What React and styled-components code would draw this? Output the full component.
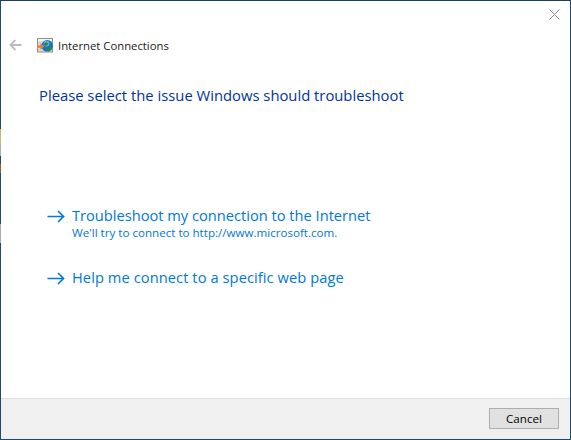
import React from "react";
import styled, { createGlobalStyle } from "styled-components";

const GlobalStyle = createGlobalStyle`
    html, body {
        margin: 0;
        padding: 0;
        background: #ffffff;
    }
    body {
        font-family: "Open Sans", "Noto Sans", "Liberation Sans", sans-serif;
    }
`;

// taskbar colours showing through the glass edge on the left
const edgeSegments = [
    { h: 128, c: "#1f4a6e" },
    { h: 15, c: "#c9b56e" },
    { h: 12, c: "#a9adad" },
    { h: 8, c: "#1f4a6e" },
    { h: 9, c: "#9a5f3a" },
    { h: 51, c: "#1f4a6e" },
    { h: 19, c: "#a9adb0" },
    { h: 198, c: "#1f4a6e" },
];

const BackIcon = () => (
    <svg width="13" height="12" viewBox="0 0 13 12" fill="none" stroke="#bcbcbc" strokeWidth="1.8">
        <path d="M12.5 6H1.5M6.4 1L1.4 6l5 5" />
    </svg>
);

const ConnectionIcon = () => (
    <svg width="16" height="15" viewBox="0 0 16 15">
        <rect x="0.5" y="0.5" width="15" height="13.5" fill="#d8d8d8" stroke="#8f8f8f" />
        <rect x="1" y="1" width="14" height="2" fill="#f7f7f7" />
        <circle cx="10.2" cy="7.8" r="5.8" fill="#1573c9" />
        <circle cx="9.6" cy="5.6" r="2.8" fill="#5cb4ee" />
        <path d="M7.2 5.4c1.6-1.6 3.4-1 4 .4L9.6 8 7.4 7.2zM9.6 10l3.8-1.6 1 1.8-3 3.2-1.8-.6z" fill="#2a8a32" />
        <path d="M0.6 7.4h2.8V5.2l4 3.3-4 3.3V9.8H0.6z" fill="#ea7a2c" />
    </svg>
);

const ArrowIcon = () => (
    <svg width="18" height="13" viewBox="0 0 18 13" fill="none" stroke="#0078d7" strokeWidth="1.6">
        <path d="M0.5 6.5h16M11 1l5.6 5.5L11 12" />
    </svg>
);

const CloseIcon = () => (
    <svg width="11" height="11" viewBox="0 0 11 11" fill="none" stroke="#8c8c8c" strokeWidth="1">
        <path d="M0.5 0.5l10 10M10.5 0.5l-10 10" />
    </svg>
);

const App = () => {
    return (
        <>
            <GlobalStyle />
            <Frame>
                <LeftEdge>
                    {edgeSegments.map((s, i) => (
                        <EdgeSegment key={i} $h={s.h} $color={s.c} />
                    ))}
                </LeftEdge>
                <Dialog>
                    <CloseButton>
                        <CloseIcon />
                    </CloseButton>
                    <Content>
                        <NavBar>
                            <BackButton>
                                <BackIcon />
                            </BackButton>
                            <ConnectionIcon />
                            <Title>Internet Connections</Title>
                        </NavBar>
                        <Heading>Please select the issue Windows should troubleshoot</Heading>
                        <Options>
                            <Option>
                                <ArrowIcon />
                                <OptionText>
                                    <OptionLabel>Troubleshoot my connection to the Internet</OptionLabel>
                                    <OptionHint>We'll try to connect to http://www.microsoft.com.</OptionHint>
                                </OptionText>
                            </Option>
                            <Option>
                                <ArrowIcon />
                                <OptionText>
                                    <OptionLabel $spacing={0.08}>Help me connect to a specific web page</OptionLabel>
                                </OptionText>
                            </Option>
                        </Options>
                    </Content>
                    <Footer>
                        <CancelButton>Cancel</CancelButton>
                    </Footer>
                </Dialog>
            </Frame>
        </>
    );
};

const Frame = styled.div`
    width: 571px;
    height: 440px;
    display: flex;
    overflow: hidden;
    box-sizing: border-box;
    border-top: 1px solid #1f3f5c;
    border-right: 1px solid #1f4a6e;
    border-bottom: 1px solid #1f4a6e;
`;

const LeftEdge = styled.div`
    width: 1px;
    flex: none;
    display: flex;
    flex-direction: column;
`;

const EdgeSegment = styled.div`
    height: ${(p) => p.$h}px;
    flex: none;
    background: ${(p) => p.$color};
`;

const Dialog = styled.div`
    flex: 1;
    position: relative;
    display: flex;
    flex-direction: column;
    background: #ffffff;
`;

const CloseButton = styled.div`
    position: absolute;
    top: 8px;
    right: 10px;
    line-height: 0;
`;

const Content = styled.div`
    flex: 1;
    display: flex;
    flex-direction: column;
`;

const NavBar = styled.div`
    display: flex;
    align-items: center;
    height: 18px;
    margin-top: 35px;
    padding-left: 8px;
`;

const BackButton = styled.div`
    width: 28px;
    line-height: 0;
`;

const Title = styled.span`
    margin-left: 5px;
    font-size: 11.3px;
    color: #1a1a1a;
`;

const Heading = styled.h1`
    margin: 31px 0 0 38px;
    font-size: 14.8px;
    line-height: 20px;
    font-weight: 400;
    color: #003399;
`;

const Options = styled.div`
    margin-top: 101px;
    padding-left: 46px;
    display: flex;
    flex-direction: column;
    gap: 27px;
`;

const Option = styled.div`
    display: flex;
    align-items: flex-start;
    gap: 7px;
    svg {
        margin-top: 4px;
        flex: none;
    }
`;

const OptionText = styled.div`
    display: flex;
    flex-direction: column;
`;

const OptionLabel = styled.span`
    font-size: 14.65px;
    line-height: 19px;
    letter-spacing: ${(p) => p.$spacing || 0}px;
    color: #0078d7;
`;

const OptionHint = styled.span`
    font-size: 11.6px;
    line-height: 16px;
    color: #0078d7;
`;

const Footer = styled.div`
    height: 41px;
    box-sizing: border-box;
    display: flex;
    justify-content: flex-end;
    align-items: flex-start;
    padding: 9px 11px 0 0;
    background: #f0f0f0;
    border-top: 1px solid #dfdfdf;
`;

const CancelButton = styled.button`
    width: 70px;
    height: 21px;
    padding: 0;
    font-family: inherit;
    font-size: 11.6px;
    color: #000000;
    background: #e1e1e1;
    border: 1px solid #adadad;
    border-radius: 0;
`;

export default App;
